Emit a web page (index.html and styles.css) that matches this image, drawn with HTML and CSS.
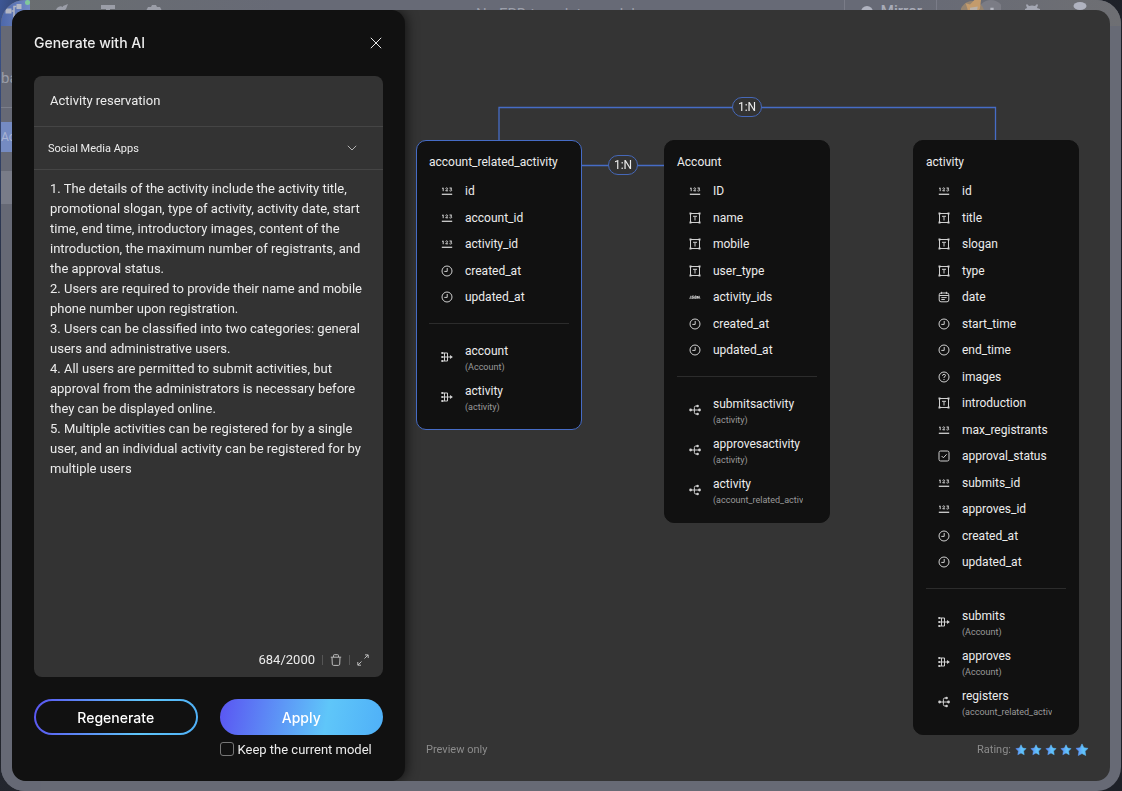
FILE: index.html
```html
<!DOCTYPE html>
<html lang="en">
<head>
<meta charset="utf-8">
<title>Generate with AI</title>
<link rel="stylesheet" href="styles.css">
</head>
<body>
<svg class="sprite" aria-hidden="true">
  <defs>
    <linearGradient id="starFill" x1="0" y1="0" x2="1" y2="0">
      <stop offset="0" stop-color="#5b86f7"/><stop offset="0.6" stop-color="#62c4fa"/><stop offset="1" stop-color="#52b2f8"/>
    </linearGradient>
  </defs>
  <symbol id="i-num" viewBox="0 0 12 12">
    <path d="M.8 9.300h10.400" stroke-width="1.300"/>
    <path d="M1 3.500l1.200-.6v3.300M4.500 3.500q.3-.7 1.300-.6 1 .2.8 1L4.700 5.800h2.400M8.500 3h2.200L9.500 4.200q1.400.1 1.300 1-.2.800-1.300.8-.7 0-1.100-.4" stroke-width="1"/>
  </symbol>
  <symbol id="i-text" viewBox="0 0 12 12">
    <path d="M1.500 1.500h9v9h-9zM4 4.300h4M6 4.300v4.200"/>
    <path class="solid" d="M.5.5h2v2h-2zM9.500.5h2v2h-2zM.5 9.500h2v2h-2zM9.500 9.500h2v2h-2z"/>
  </symbol>
  <symbol id="i-clock" viewBox="0 0 12 12">
    <circle cx="6" cy="6" r="5"/><path d="M6.200 3v3.400H3.300"/>
  </symbol>
  <symbol id="i-json" viewBox="0 0 12 12">
    <path d="M1.800 4.800v1.700q0 .8-1.200.6M4.800 5H3.300l-.2.9 1.400.3-.2.900H2.700M6 5h1.200v2.100H5.700zM8.500 7.300V5l1.700 2.100V4.800" stroke-width=".9"/>
    <path d="M.3 7.300h11.200" stroke-width=".5"/>
  </symbol>
  <symbol id="i-date" viewBox="0 0 12 12">
    <rect x="1.200" y="2" width="9.600" height="8.800" rx="1.800"/>
    <path d="M3.600.8v2.200M8.400.8v2.200M1.200 4.500h9.600M3.300 6.600h5.400M3.300 8.500h3.500"/>
  </symbol>
  <symbol id="i-help" viewBox="0 0 12 12">
    <circle cx="6" cy="6" r="5"/><path d="M4.500 4.800q.1-1.500 1.600-1.500 1.500.1 1.400 1.400-.1.900-1.500 1.400v.8M6 8v1"/>
  </symbol>
  <symbol id="i-bool" viewBox="0 0 12 12">
    <rect x="1" y="1" width="10" height="10" rx="1.600"/><path d="M3.600 6l1.800 1.800 3.200-3.500"/>
  </symbol>
  <symbol id="i-one" viewBox="0 0 12 12">
    <path d="M1 2h5.500v8H1M1 6h9.500M3.500 2v8"/>
    <circle class="solid" cx="1.200" cy="2" r="1.100"/><circle class="solid" cx="1.200" cy="6" r="1.100"/><circle class="solid" cx="1.200" cy="10" r="1.100"/><path class="solid" d="M9 4L11.900 6 9 8z"/>
  </symbol>
  <symbol id="i-many" viewBox="0 0 12 12">
    <path d="M1.500 6h9M8.500 2H6.800Q5.400 2 5.400 3.400v5.200q0 1.400 1.400 1.400h1.700"/>
    <circle class="solid" cx="1.600" cy="6" r="1.400"/><circle class="solid" cx="8.600" cy="2" r="1.300"/><circle class="solid" cx="10.500" cy="6" r="1.400"/><circle class="solid" cx="8.600" cy="10" r="1.300"/>
  </symbol>
  <symbol id="i-star" viewBox="0 0 12 12">
    <path d="M6 .8l1.600 3.300 3.600.5-2.600 2.500.6 3.600L6 9l-3.200 1.700.6-3.600L.8 4.600l3.600-.5z" fill="url(#starFill)" stroke="url(#starFill)" stroke-width=".5" stroke-linejoin="round"/>
  </symbol>
</svg>

<div class="app">
  <header class="topbar">
    <div class="topbar-logo">
      <svg class="logo-icon" viewBox="0 0 16 16"><path d="M0 4.500h6v5H0zM11 0h5v5h-5zM11 10h5v5h-5z" fill="#b3b7c4"/><path d="M6 7h2.500M11 2.500H8.500v10H11" fill="none" stroke="#b3b7c4" stroke-width="1.500"/></svg>
      <span class="logo-dot"></span>
    </div>
    <nav class="topbar-tools">
      <svg viewBox="0 0 16 16"><path d="M9 2l5-2-2 5-3 3zM3 4q3-3 6-1l1 3-5 6-3-2 2-3-2-1z"/></svg>
      <svg viewBox="0 0 16 16"><path d="M1 1h14v4h-5v10H6V5H1z"/></svg>
      <svg viewBox="0 0 16 16"><path d="M6 1h4l1 2 3 0 2 4-2 3 0 3-4 2H6l-4-2 0-3-2-3 2-4 3 0z"/></svg>
    </nav>
    <p class="topbar-title">No ERD template model</p>
    <div class="topbar-mirror"><span class="mirror-dot"></span>Mirror</div>
    <div class="topbar-user">
      <svg class="avatar" viewBox="0 0 36 20"><circle cx="27" cy="12" r="12" fill="#7b7c85"/><circle cx="10" cy="12" r="11" fill="#96846f"/><path d="M4 3l4 1 4-4 6 0-1 8-3 4H7z" fill="#c39b6c"/><path d="M8 7l7-1-1 7H8z" fill="#b9b0a8"/><path d="M26.500 7h3v9h-3z" fill="#b3b5bf"/></svg>
      <svg class="bug" viewBox="0 0 16 16"><path d="M3 2l2 2q3-1 6 0l2-2 1 1-1 3 3 1v2H1V7l2-1-1-3z" fill="#a4a7b3"/></svg>
      <svg class="bubble" viewBox="0 0 14 16"><ellipse cx="7" cy="6" rx="6.500" ry="4" fill="#b0b3c0"/></svg>
    </div>
  </header>
  <aside class="rail">
    <p class="rail-title">ba</p>
    <p class="rail-active">Ac</p>
    <div class="rail-block"></div>
  </aside>
</div>

<main class="dialog">
  <form class="panel">
    <div class="panel-head">
      <h1 class="panel-title">Generate with AI</h1>
      <button class="icon-btn" type="button" aria-label="Close">
        <svg class="close-icon" viewBox="0 0 12 12"><path d="M.8.8l10.400 10.400M11.200.8L.8 11.200"/></svg>
      </button>
    </div>
    <div class="box">
      <input class="name-input" type="text" aria-label="Name" value="Activity reservation">
      <div class="select-row">
        <select class="kind-select" aria-label="App type"><option>Social Media Apps</option></select>
        <svg class="chevron" viewBox="0 0 10 6"><path d="M.8.8L5 5 9.200.8"/></svg>
      </div>
      <textarea class="details" aria-label="Requirements">1. The details of the activity include the activity title, promotional slogan, type of activity, activity date, start time, end time, introductory images, content of the introduction, the maximum number of registrants, and the approval status.
2. Users are required to provide their name and mobile phone number upon registration.
3. Users can be classified into two categories: general users and administrative users.
4. All users are permitted to submit activities, but approval from the administrators is necessary before they can be displayed online.
5. Multiple activities can be registered for by a single user, and an individual activity can be registered for by multiple users</textarea>
      <div class="box-foot">
        <span class="count">684/2000</span>
        <span class="bar"></span>
        <button class="icon-btn" type="button" aria-label="Clear">
          <svg class="tool-icon" viewBox="0 0 12 12"><path d="M.8 3.200h10.400M3.500 3V1.500q0-.8.8-.8h3.400q.8 0 .8.800V3M2 3.400l.3 6.800q.1 1.200 1.300 1.200h4.800q1.200 0 1.300-1.200l.3-6.800"/></svg>
        </button>
        <span class="bar"></span>
        <button class="icon-btn" type="button" aria-label="Expand">
          <svg class="tool-icon" viewBox="0 0 12 12"><path d="M7.500 4.500L11 1M8 .9h3.200V4M4.500 7.500L1 11M.8 8v3.200H4"/></svg>
        </button>
      </div>
    </div>
    <div class="actions">
      <button class="btn btn-outline" type="button">Regenerate</button>
      <div class="apply">
        <button class="btn btn-fill" type="button">Apply</button>
        <label class="keep"><input class="keep-box" type="checkbox">Keep the current model</label>
      </div>
    </div>
  </form>

  <section class="preview">
    <div class="canvas">
      <svg class="wires" viewBox="0 0 705 725"><path d="M94 130V97.500H590.500V130M176 155.500H260"/></svg>
      <span class="tag tag-top">1:N</span>
      <span class="tag tag-side">1:N</span>

      <article class="table table-link">
        <h2 class="table-name">account_related_activity</h2>
        <ul class="fields">
          <li><svg><use href="#i-num"/></svg>id</li>
          <li><svg><use href="#i-num"/></svg>account_id</li>
          <li><svg><use href="#i-num"/></svg>activity_id</li>
          <li><svg><use href="#i-clock"/></svg>created_at</li>
          <li><svg><use href="#i-clock"/></svg>updated_at</li>
        </ul>
        <ul class="relations">
          <li><svg><use href="#i-one"/></svg><div class="rel">account<small>(Account)</small></div></li>
          <li><svg><use href="#i-one"/></svg><div class="rel">activity<small>(activity)</small></div></li>
        </ul>
      </article>

      <article class="table table-account">
        <h2 class="table-name">Account</h2>
        <ul class="fields">
          <li><svg><use href="#i-num"/></svg>ID</li>
          <li><svg><use href="#i-text"/></svg>name</li>
          <li><svg><use href="#i-text"/></svg>mobile</li>
          <li><svg><use href="#i-text"/></svg>user_type</li>
          <li><svg><use href="#i-json"/></svg>activity_ids</li>
          <li><svg><use href="#i-clock"/></svg>created_at</li>
          <li><svg><use href="#i-clock"/></svg>updated_at</li>
        </ul>
        <ul class="relations">
          <li><svg><use href="#i-many"/></svg><div class="rel">submitsactivity<small>(activity)</small></div></li>
          <li><svg><use href="#i-many"/></svg><div class="rel">approvesactivity<small>(activity)</small></div></li>
          <li><svg><use href="#i-many"/></svg><div class="rel">activity<small>(account_related_activity)</small></div></li>
        </ul>
      </article>

      <article class="table table-activity">
        <h2 class="table-name">activity</h2>
        <ul class="fields">
          <li><svg><use href="#i-num"/></svg>id</li>
          <li><svg><use href="#i-text"/></svg>title</li>
          <li><svg><use href="#i-text"/></svg>slogan</li>
          <li><svg><use href="#i-text"/></svg>type</li>
          <li><svg><use href="#i-date"/></svg>date</li>
          <li><svg><use href="#i-clock"/></svg>start_time</li>
          <li><svg><use href="#i-clock"/></svg>end_time</li>
          <li><svg><use href="#i-help"/></svg>images</li>
          <li><svg><use href="#i-text"/></svg>introduction</li>
          <li><svg><use href="#i-num"/></svg>max_registrants</li>
          <li><svg><use href="#i-bool"/></svg>approval_status</li>
          <li><svg><use href="#i-num"/></svg>submits_id</li>
          <li><svg><use href="#i-num"/></svg>approves_id</li>
          <li><svg><use href="#i-clock"/></svg>created_at</li>
          <li><svg><use href="#i-clock"/></svg>updated_at</li>
        </ul>
        <ul class="relations">
          <li><svg><use href="#i-one"/></svg><div class="rel">submits<small>(Account)</small></div></li>
          <li><svg><use href="#i-one"/></svg><div class="rel">approves<small>(Account)</small></div></li>
          <li><svg><use href="#i-many"/></svg><div class="rel">registers<small>(account_related_activity)</small></div></li>
        </ul>
      </article>
    </div>
    <footer class="preview-foot">
      <span>Preview only</span>
      <div class="rating">Rating:
        <div class="stars">
          <button class="star" type="button" aria-label="1 star"><svg><use href="#i-star"/></svg></button>
          <button class="star" type="button" aria-label="2 stars"><svg><use href="#i-star"/></svg></button>
          <button class="star" type="button" aria-label="3 stars"><svg><use href="#i-star"/></svg></button>
          <button class="star" type="button" aria-label="4 stars"><svg><use href="#i-star"/></svg></button>
          <button class="star star-big" type="button" aria-label="5 stars"><svg><use href="#i-star"/></svg></button>
        </div>
      </div>
    </footer>
  </section>
</main>
</body>
</html>
```

FILE: styles.css
```css
* { box-sizing: border-box; margin: 0; padding: 0; }

body {
  min-height: 100vh;
  background: linear-gradient(100deg, #3d5795 0, #23262e 60px, #1e2128 100%);
  color: #ececec;
  font-family: Roboto, "Liberation Sans", sans-serif;
  font-size: 12px;
}

button, input, select, textarea { font: inherit; color: inherit; border: 0; background: none; outline: none; }
ul { list-style: none; }
svg { display: block; }
.sprite { position: absolute; width: 0; height: 0; }

/* application behind the dialog */
.app {
  height: 100vh;
  margin: 0 1px;
  border-radius: 24px;
  overflow: hidden;
  background: #676a75;
}
.topbar { position: relative; height: 26px; background: linear-gradient(90deg, #6a6e70, #676a76 25%, #676a76 80%, #6e6f73); overflow: hidden; }
.topbar-logo { position: relative; width: 29px; height: 26px; padding: 4px 0 0 4px; background: linear-gradient(90deg, #4d68ab, #7389c4); }
.logo-icon { width: 17px; height: 16px; }
.logo-dot { position: absolute; right: 0; top: 0; width: 5px; height: 5px; border-radius: 50%; background: #80c89c; }
.topbar-tools { position: absolute; left: 53px; top: 4px; display: flex; gap: 30px; }
.topbar-tools svg { width: 16px; height: 16px; fill: #9b9ea8; }
.topbar-title { position: absolute; left: 475px; top: 5px; font-size: 15px; line-height: 18px; color: #9b9ea9; white-space: nowrap; }
.topbar-mirror { position: absolute; right: 184px; top: 0; display: flex; align-items: center; gap: 8px; height: 26px; padding: 0 14px 4px 16px; border: 1px solid #7a7c88; border-width: 0 1px; font-size: 15px; font-weight: 500; color: #a9acb8; }
.mirror-dot { width: 12px; height: 12px; margin-top: 2px; border-radius: 50%; background: #b0b3c0; }
.topbar-user { position: absolute; right: 34px; top: 0; display: flex; }
.avatar { width: 40px; height: 22px; }
.bug { width: 16px; height: 16px; margin: 2px 0 0 23px; }
.bubble { width: 14px; height: 16px; margin-left: 33px; }
.rail { width: 40px; height: 100%; background: #666975; }
.rail-title { height: 82px; padding-top: 43px; border-bottom: 1px solid #7b7e8a; font-size: 15px; line-height: 18px; color: #9a9da8; }
.rail-active { height: 30px; margin-top: 14px; background: #758bc2; font-size: 12px; line-height: 30px; color: #a9b4d3; }
.rail-block { height: 33px; margin-top: 19px; background: #797c88; }

/* dialog */
.dialog {
  position: fixed;
  inset: 10px 12px;
  display: flex;
  border-radius: 14px;
  overflow: hidden;
  background: #343434;
}
.panel {
  position: relative;
  display: flex;
  flex: none;
  flex-direction: column;
  width: 393px;
  padding: 22px 22px 20px;
  border-radius: 14px;
  background: #111;
  box-shadow: 2px 0 12px rgba(0, 0, 0, .6);
}
.panel-head { display: flex; align-items: center; justify-content: space-between; height: 22px; margin-bottom: 22px; }
.panel-title { font-family: Inter, Roboto, sans-serif; font-size: 14px; font-weight: 500; line-height: 20px; }
.icon-btn { display: flex; cursor: pointer; }
.close-icon { width: 12px; height: 12px; margin-right: 1px; fill: none; stroke: #e8e8e8; stroke-width: 1; }

.box { display: flex; flex: 1; flex-direction: column; border-radius: 8px; background: #333; overflow: hidden; }
.name-input { height: 51px; padding: 0 16px 2px; border-bottom: 1px solid #454545; font-size: 13px; }
.select-row { display: flex; align-items: center; height: 43px; padding-right: 26px; border-bottom: 1px solid #454545; }
.kind-select { flex: 1; height: 42px; padding-left: 14px; appearance: none; font-size: 11px; }
.chevron { width: 10px; height: 6px; fill: none; stroke: #b4b4b4; stroke-width: 1; }
.details { flex: 1; padding: 9px 18px 0 16px; resize: none; overflow: hidden; font-size: 13px; line-height: 20px; }
.box-foot { display: flex; align-items: center; justify-content: flex-end; gap: 7px; height: 34px; padding: 0 14px 0 0; }
.count { font-size: 13px; line-height: 20px; }
.bar { width: 1px; height: 10px; background: #555; }
.tool-icon { width: 12px; height: 12px; fill: none; stroke: #bdbdbd; stroke-width: 1; }

.actions { display: grid; grid-template-columns: 1fr 1fr; gap: 22px; margin-top: 22px; }
.btn { width: 100%; height: 36px; border-radius: 18px; color: #fff; font-family: Inter, Roboto, sans-serif; font-size: 14px; font-weight: 500; cursor: pointer; }
.btn-outline {
  border: 2px solid transparent;
  background: linear-gradient(#111, #111) padding-box, linear-gradient(100deg, #5a55f2, #5fc6f9 65%, #4fb0f8) border-box;
}
.btn-fill { display: block; background: linear-gradient(100deg, #5a55f2, #5fc6f9 65%, #4fb0f8); }
.keep { display: flex; align-items: center; gap: 4px; height: 24px; margin-top: 2px; font-size: 13px; white-space: nowrap; }
.keep-box { width: 14px; height: 14px; border: 1px solid #777; border-radius: 3px; appearance: none; }

/* model preview */
.preview { display: flex; flex: 1; flex-direction: column; min-width: 0; }
.canvas { position: relative; flex: 1; }
.wires { position: absolute; left: 0; top: 0; width: 705px; height: 725px; fill: none; stroke: #466cc6; stroke-width: 1.3; }
.tag { position: absolute; width: 30px; height: 20px; border: 1px solid #4668b8; border-radius: 10px; background: #333; font-size: 12px; line-height: 18px; text-align: center; }
.tag-top { left: 327px; top: 87px; }
.tag-side { left: 203px; top: 145px; }
.table { position: absolute; top: 130px; width: 166px; padding: 11px 12px 16px; border: 1px solid #111; border-radius: 10px; background: #111; }
.table-link { left: 11px; border-color: #466cc6; }
.table-account { left: 259px; }
.table-activity { left: 508px; }
.table-name { margin-bottom: 6px; font-size: 12px; font-weight: 400; line-height: 20px; }
.fields { padding-bottom: 13px; border-bottom: 1px solid #2c2c2c; }
.fields li { display: flex; align-items: center; gap: 12px; height: 26px; padding-left: 12px; }
.fields li:nth-child(even) { height: 27px; }
.table svg { flex: none; width: 12px; height: 12px; fill: none; stroke: #d0d0d0; stroke-width: 1; }
.solid { fill: #d0d0d0; stroke: none; }
.relations { display: flex; flex-direction: column; gap: 8px; padding-top: 17px; }
.relations li { display: flex; align-items: center; gap: 12px; padding-left: 12px; }
.rel { width: 90px; line-height: 20px; white-space: nowrap; overflow: hidden; }
.rel small { display: block; font-size: 9px; line-height: 12px; color: #9a9a9a; }

.preview-foot { display: flex; align-items: center; justify-content: space-between; padding: 5px 21px 21px; font-size: 11px; line-height: 20px; color: #8c8c8c; }
.rating { display: flex; gap: 4px; }
.stars { display: flex; align-items: center; gap: 3px; }
.star { cursor: pointer; }
.star svg { width: 12px; height: 12px; }
.star-big svg { width: 14px; height: 14px; }
```
